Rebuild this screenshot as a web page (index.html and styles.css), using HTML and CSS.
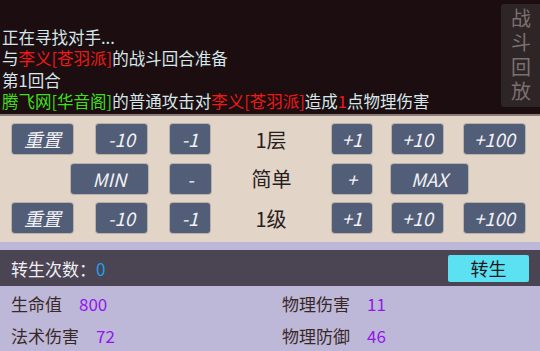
FILE: index.html
```html
<!DOCTYPE html>
<html>
<head>
<meta charset="utf-8">
<link rel="stylesheet" href="styles.css">
</head>
<body>
<div class="app">
  <div class="log">
    <div class="lines">
      <div>正在寻找对手...</div>
      <div>与<span class="red">李义[苍羽派]</span>的战斗回合准备</div>
      <div>第1回合</div>
      <div><span class="green">腾飞网[华音阁]</span>的普通攻击对<span class="red">李义[苍羽派]</span>造成<span class="red">1</span>点物理伤害</div>
    </div>
    <div class="replay"><span class="replay-text">战斗回放</span></div>
  </div>
  <div class="controls">
    <div class="row">
      <div class="btn w61 ml12">重置</div>
      <div class="btn w51 ml23">-10</div>
      <div class="btn w40 ml23">-1</div>
      <div class="label w122">1层</div>
      <div class="btn w40">+1</div>
      <div class="btn w51 ml20">+10</div>
      <div class="btn w61 ml21">+100</div>
    </div>
    <div class="row">
      <div class="btn w77 ml71">MIN</div>
      <div class="btn w41 ml22">-</div>
      <div class="label w121">简单</div>
      <div class="btn w40">+</div>
      <div class="btn w77 ml19">MAX</div>
    </div>
    <div class="row">
      <div class="btn w61 ml12">重置</div>
      <div class="btn w51 ml23">-10</div>
      <div class="btn w40 ml23">-1</div>
      <div class="label w122">1级</div>
      <div class="btn w40">+1</div>
      <div class="btn w51 ml20">+10</div>
      <div class="btn w61 ml21">+100</div>
    </div>
  </div>
  <div class="bottom">
    <div class="rebirth">
      <div class="rb-text">转生次数：<span class="blue">0</span></div>
      <div class="rb-btn">转生</div>
    </div>
    <div class="stats">
      <div class="stat"><span class="sl">生命值</span><span class="sv">800</span></div>
      <div class="stat"><span class="sl">物理伤害</span><span class="sv">11</span></div>
      <div class="stat"><span class="sl">法术伤害</span><span class="sv">72</span></div>
      <div class="stat"><span class="sl">物理防御</span><span class="sv">46</span></div>
    </div>
  </div>
</div>
</body>
</html>
```
FILE: styles.css
```css
* { box-sizing: border-box; }
html, body { margin: 0; padding: 0; }
body {
  width: 540px;
  height: 351px;
  overflow: hidden;
  font-family: "Noto Sans CJK SC", "Noto Sans", sans-serif;
}
.app { width: 540px; height: 351px; display: flex; flex-direction: column; }

.log {
  height: 116px;
  background: #1c0e10;
  border-bottom: 2px solid #8a7c79;
  display: flex;
  justify-content: space-between;
  flex-shrink: 0;
}
.lines {
  padding: 27px 0 0 2px;
  color: #d6e6ea;
  font-size: 16.5px;
  line-height: 21.3px;
  white-space: nowrap;
}
.red { color: #f01818; }
.green { color: #3ede1e; }
.replay {
  margin-top: 4px;
  width: 39px;
  height: 103px;
  background: #2e2526;
  border-radius: 3px 0 0 3px;
  display: flex;
  justify-content: center;
  padding-top: 4px;
}
.replay-text {
  writing-mode: vertical-rl;
  text-orientation: upright;
  color: #7b7070;
  font-size: 20px;
  letter-spacing: 4.5px;
  line-height: 24px;
}

.controls {
  height: 126px;
  background: #e2d4c6;
  padding-top: 8px;
  display: flex;
  flex-direction: column;
  gap: 9.5px;
  flex-shrink: 0;
}
.row { display: flex; height: 30px; align-items: center; }
.btn {
  height: 30px;
  background: #525d78;
  border-radius: 3px;
  color: #f2f2f4;
  font-style: italic;
  font-size: 18.5px;
  display: flex;
  align-items: center;
  justify-content: center;
  box-shadow: 0 0 0 1px rgba(60,70,90,0.25);
}
.label {
  height: 30px;
  font-size: 20px;
  color: #262020;
  display: flex;
  align-items: center;
  justify-content: center;
}
.w40 { width: 40px; } .w41 { width: 41px; } .w51 { width: 51px; }
.w61 { width: 61px; } .w77 { width: 77px; } .w121 { width: 121px; } .w122 { width: 122px; }
.ml12 { margin-left: 12px; } .ml19 { margin-left: 19px; } .ml20 { margin-left: 20px; }
.ml21 { margin-left: 21px; } .ml22 { margin-left: 22px; } .ml23 { margin-left: 23px; }
.ml71 { margin-left: 71px; }

.bottom {
  flex: 1;
  background: #bdb8d8;
  padding-top: 8px;
}
.rebirth {
  height: 36px;
  background: #4a4453;
  display: flex;
  align-items: center;
  justify-content: space-between;
  padding: 0 11px 0 11px;
}
.rb-text { color: #f0eef2; font-size: 17px; }
.blue { color: #1ea0ea; }
.rb-btn {
  width: 81px;
  height: 27px;
  background: #5ce1f3;
  border-radius: 2px;
  color: #1e1a1e;
  font-size: 18px;
  display: flex;
  align-items: center;
  justify-content: center;
}
.stats {
  display: grid;
  grid-template-columns: 271px 258px;
  padding: 6px 0 0 11px;
  row-gap: 9px;
}
.stat { display: flex; align-items: center; height: 23px; font-size: 17px; }
.sl { color: #3a2828; margin-right: 17px; }
.sv { color: #9416ec; }
```
